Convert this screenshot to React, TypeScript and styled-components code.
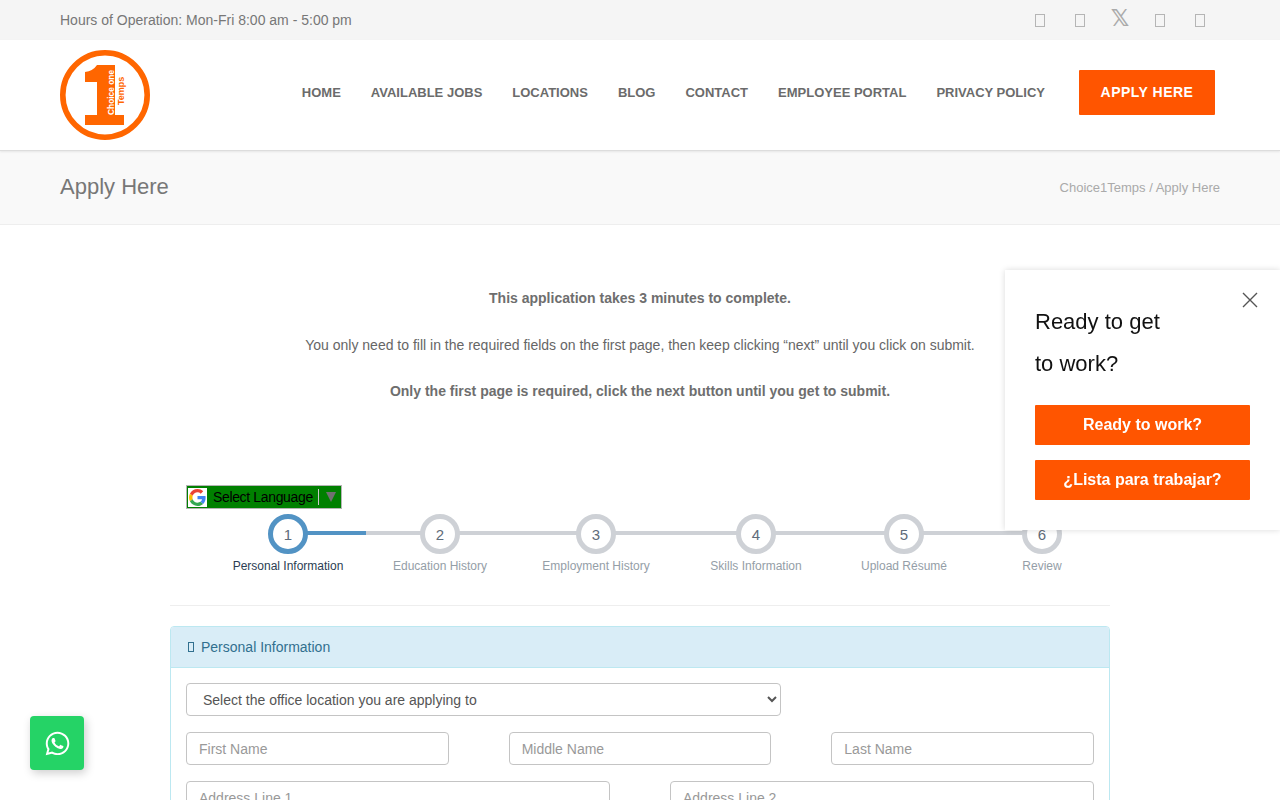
import React from 'react';
import styled, { createGlobalStyle } from 'styled-components';
import { FaWhatsapp } from 'react-icons/fa';

const GlobalStyle = createGlobalStyle`
  html, body {
    margin: 0;
    height: 100%;
    overflow: hidden;
    background: #fff;
    font-family: "Liberation Sans", Arial, sans-serif;
    font-size: 14px;
    color: #777;
  }
  * { box-sizing: border-box; }
`;

const TopBar = styled.div`
  height: 40px;
  background: #f5f5f5;
  display: flex;
  align-items: center;
  justify-content: space-between;
  padding: 0 60px;
`;

const Hours = styled.span`
  color: #777;
`;

const Socials = styled.div`
  display: flex;
  width: 200px;
  margin-left: auto;
`;

const SocialItem = styled.a`
  width: 40px;
  height: 40px;
  display: flex;
  align-items: center;
  justify-content: center;
  color: #aaa;
`;

const Tofu = styled.span`
  display: inline-block;
  width: 10px;
  height: 13px;
  border: 1px solid #b5b5b5;
`;

const SmallTofu = styled.span`
  display: inline-block;
  width: 6px;
  height: 10px;
  border: 1px solid #31708f;
`;

const XGlyph = styled.span`
  font-family: "DejaVu Sans", sans-serif;
  font-size: 23px;
  font-weight: 700;
  line-height: 1;
  margin-top: -3px;
`;

const Header = styled.header`
  height: 111px;
  background: #fff;
  border-bottom: 1px solid #ddd;
  box-shadow: 0 1px 2px rgba(0, 0, 0, 0.08);
  position: relative;
  display: flex;
  align-items: center;
  padding: 0 65px 1px 60px;
`;

const Logo = styled.svg`
  width: 90px;
  height: 90px;
  display: block;
`;

const Nav = styled.nav`
  margin-left: auto;
  margin-top: -5px;
  display: flex;
  align-items: center;
  gap: 30px;
`;

const NavLink = styled.a`
  font-weight: 700;
  font-size: 13px;
  color: #6b6b6b;
`;

const ApplyButton = styled.a`
  margin-left: 4px;
  width: 136px;
  height: 45px;
  background: #ff5500;
  color: #fff;
  font-weight: 700;
  letter-spacing: 0.5px;
  display: flex;
  align-items: center;
  justify-content: center;
  border-radius: 1px;
`;

const TitleBar = styled.div`
  height: 74px;
  background: #f9f9f9;
  border-bottom: 1px solid #eee;
  display: flex;
  align-items: center;
  justify-content: space-between;
  padding: 0 60px 2px;
`;

const PageTitle = styled.h1`
  margin: 0;
  font-size: 22px;
  font-weight: 400;
  color: #777;
`;

const Breadcrumb = styled.div`
  margin-top: 1px;
  font-size: 13px;
  color: #aaa;
`;

const Main = styled.main`
  width: 940px;
  margin: 0 auto;
  padding-top: 64px;
`;

const Intro = styled.p<{ $bold?: boolean }>`
  margin: 0 0 28.5px;
  height: 18px;
  line-height: 18px;
  text-align: center;
  font-weight: ${(p) => (p.$bold ? 700 : 400)};
  color: ${(p) => (p.$bold ? '#6e6e6e' : '#666')};
`;

const LanguageBox = styled.div`
  margin: 85px 0 0 16px;
  width: 156px;
  height: 24px;
  background: #008000;
  border: 1px solid #b5b5b5;
  display: flex;
  align-items: center;
  padding-left: 1px;
  color: #000;
  white-space: nowrap;
`;

const GoogleBadge = styled.span`
  flex: none;
  width: 19px;
  height: 19px;
  background: #fff;
  display: flex;
  align-items: center;
  justify-content: center;
  margin-right: 6px;
`;

const LanguageLabel = styled.span`
  font-size: 14px;
  letter-spacing: -0.35px;
`;

const LanguageDivider = styled.span`
  flex: none;
  width: 1px;
  height: 16px;
  background: #c8c8c8;
  margin: 0 7px 0 5px;
`;

const LanguageArrow = styled.span`
  flex: none;
  width: 0;
  height: 0;
  border-left: 5px solid transparent;
  border-right: 5px solid transparent;
  border-top: 10px solid #707070;
`;

const Stepper = styled.div`
  display: flex;
  margin-top: 5px;
  padding-left: 40px;
  padding-bottom: 32px;
  border-bottom: 1px solid #eee;
`;

const Step = styled.div<{ $width: number; $first?: boolean; $last?: boolean; $active?: boolean }>`
  flex: none;
  width: ${(p) => p.$width}px;
  position: relative;
  display: flex;
  flex-direction: column;
  align-items: center;
  white-space: nowrap;

  &::before {
    content: '';
    display: ${(p) => (p.$first ? 'none' : 'block')};
    position: absolute;
    top: 17px;
    left: 0;
    width: 50%;
    height: 4px;
    background: #ced1d6;
  }

  &::after {
    content: '';
    display: ${(p) => (p.$last ? 'none' : 'block')};
    position: absolute;
    top: 17px;
    right: 0;
    width: 50%;
    height: 4px;
    background: ${(p) => (p.$active ? '#5293c4' : '#ced1d6')};
  }
`;

const StepCircle = styled.span<{ $active?: boolean }>`
  position: relative;
  z-index: 1;
  width: 40px;
  height: 40px;
  border-radius: 50%;
  background: #fff;
  border: 5px solid ${(p) => (p.$active ? '#5293c4' : '#ced1d6')};
  display: flex;
  align-items: center;
  justify-content: center;
  font-size: 15px;
  color: #5f6c7a;
`;

const StepLabel = styled.span<{ $active?: boolean }>`
  margin-top: 5px;
  height: 14px;
  line-height: 14px;
  font-size: 12px;
  color: ${(p) => (p.$active ? '#2b3d53' : '#949ea7')};
`;

const Panel = styled.section`
  margin-top: 20px;
  border: 1px solid #bce8f1;
  border-radius: 4px;
  background: #fff;
`;

const PanelHeading = styled.div`
  height: 41px;
  background: #d9edf7;
  border-bottom: 1px solid #bce8f1;
  border-radius: 3px 3px 0 0;
  color: #31708f;
  display: flex;
  align-items: center;
  gap: 7px;
  padding-left: 17px;
`;

const PanelBody = styled.div`
  padding: 15px;
  display: flex;
  flex-direction: column;
  gap: 16px;
`;

const OfficeSelect = styled.select`
  width: 595px;
  height: 33px;
  background: #fff;
  border: 1px solid #c4c4c4;
  border-radius: 4px;
  padding-left: 12px;
  font-family: inherit;
  font-size: 14px;
  color: #555;
`;

const Row = styled.div<{ $cols: number }>`
  display: grid;
  grid-template-columns: repeat(${(p) => p.$cols}, 1fr);
  column-gap: 60px;
`;

const TextInput = styled.input`
  height: 33px;
  width: 100%;
  min-width: 0;
  border: 1px solid #c4c4c4;
  border-radius: 4px;
  padding: 0 12px;
  font-family: inherit;
  font-size: 14px;
  color: #555;
  &::placeholder {
    color: #999;
    opacity: 1;
  }
`;

const Popup = styled.aside`
  position: fixed;
  top: 270px;
  right: 0;
  width: 275px;
  height: 260px;
  background: #fff;
  box-shadow: 0 0 6px rgba(0, 0, 0, 0.15);
  padding: 31px 30px 0;
  z-index: 5;
`;

const CloseIcon = styled.svg`
  position: absolute;
  top: 22px;
  right: 22px;
  width: 16px;
  height: 16px;
`;

const PopupTitle = styled.div`
  font-size: 22px;
  line-height: 42px;
  color: #111;
  margin-bottom: 20px;
`;

const PopupButton = styled.a`
  display: flex;
  align-items: center;
  justify-content: center;
  width: 215px;
  height: 40px;
  margin-bottom: 15px;
  background: #ff5500;
  border-radius: 1px;
  color: #fff;
  font-size: 16px;
  font-weight: 700;
`;

const WhatsApp = styled.a`
  position: fixed;
  left: 30px;
  bottom: 30px;
  width: 54px;
  height: 54px;
  border-radius: 4px;
  background: #25d366;
  box-shadow: 2px 3px 10px rgba(0, 0, 0, 0.2);
  color: #fff;
  display: flex;
  align-items: center;
  justify-content: center;
  font-size: 27px;
`;

const navItems = ['HOME', 'AVAILABLE JOBS', 'LOCATIONS', 'BLOG', 'CONTACT', 'EMPLOYEE PORTAL', 'PRIVACY POLICY'];

const steps = [
  { label: 'Personal Information', width: 156 },
  { label: 'Education History', width: 148 },
  { label: 'Employment History', width: 164 },
  { label: 'Skills Information', width: 156 },
  { label: 'Upload Résumé', width: 140 },
  { label: 'Review', width: 136 },
];

function App() {
  return (
    <>
      <GlobalStyle />
      <TopBar>
        <Hours>Hours of Operation: Mon-Fri 8:00 am - 5:00 pm</Hours>
        <Socials>
          <SocialItem><Tofu /></SocialItem>
          <SocialItem><Tofu /></SocialItem>
          <SocialItem><XGlyph>𝕏</XGlyph></SocialItem>
          <SocialItem><Tofu /></SocialItem>
          <SocialItem><Tofu /></SocialItem>
        </Socials>
      </TopBar>

      <Header>
        <Logo viewBox="0 0 90 90">
          <circle cx="45" cy="45" r="42.2" fill="none" stroke="#ff6600" strokeWidth="5.6" />
          <path d="M37 15H55V65H64V75H25V65H37V32H25V22Q33 21 37 15Z" fill="#ff6600" />
          <text x="0" y="0" transform="translate(54 65) rotate(-90)" fill="#fff" fontSize="8.4" fontWeight="700">Choice one</text>
          <text x="0" y="0" transform="translate(64 55) rotate(-90)" fill="#ff6600" fontSize="9" fontWeight="700">Temps</text>
        </Logo>
        <Nav>
          {navItems.map((item) => (
            <NavLink key={item}>{item}</NavLink>
          ))}
          <ApplyButton>APPLY HERE</ApplyButton>
        </Nav>
      </Header>

      <TitleBar>
        <PageTitle>Apply Here</PageTitle>
        <Breadcrumb>Choice1Temps / Apply Here</Breadcrumb>
      </TitleBar>

      <Main>
        <Intro $bold>This application takes 3 minutes to complete.</Intro>
        <Intro>You only need to fill in the required fields on the first page, then keep clicking “next” until you click on submit.</Intro>
        <Intro $bold>Only the first page is required, click the next button until you get to submit.</Intro>

        <LanguageBox>
          <GoogleBadge>
            <svg width="17" height="17" viewBox="0 0 48 48">
              <path fill="#EA4335" d="M24 9.5c3.5 0 6.7 1.2 9.2 3.6l6.9-6.9C35.9 2.4 30.5 0 24 0 14.6 0 6.5 5.4 2.6 13.2l8 6.2C12.5 13.7 17.8 9.5 24 9.5z" />
              <path fill="#4285F4" d="M46.9 24.5c0-1.6-.1-3.1-.4-4.5H24v9h12.9c-.6 3-2.2 5.5-4.7 7.2l7.7 6c4.5-4.2 7-10.3 7-17.7z" />
              <path fill="#FBBC05" d="M10.5 28.6c-.5-1.4-.8-3-.8-4.6s.3-3.2.8-4.6l-8-6.2C.9 16.5 0 20.1 0 24s.9 7.5 2.6 10.8l7.9-6.2z" />
              <path fill="#34A853" d="M24 48c6.5 0 11.9-2.1 15.9-5.8l-7.7-6c-2.1 1.4-4.9 2.3-8.2 2.3-6.2 0-11.5-4.2-13.4-9.9l-8 6.2C6.5 42.6 14.6 48 24 48z" />
            </svg>
          </GoogleBadge>
          <LanguageLabel>Select Language</LanguageLabel>
          <LanguageDivider />
          <LanguageArrow />
        </LanguageBox>

        <Stepper>
          {steps.map((step, i) => (
            <Step key={step.label} $width={step.width} $first={i === 0} $last={i === steps.length - 1} $active={i === 0}>
              <StepCircle $active={i === 0}>{i + 1}</StepCircle>
              <StepLabel $active={i === 0}>{step.label}</StepLabel>
            </Step>
          ))}
        </Stepper>

        <Panel>
          <PanelHeading>
            <SmallTofu />
            Personal Information
          </PanelHeading>
          <PanelBody>
            <OfficeSelect defaultValue="">
              <option value="">Select the office location you are applying to</option>
            </OfficeSelect>
            <Row $cols={3}>
              <TextInput placeholder="First Name" />
              <TextInput placeholder="Middle Name" />
              <TextInput placeholder="Last Name" />
            </Row>
            <Row $cols={2}>
              <TextInput placeholder="Address Line 1" />
              <TextInput placeholder="Address Line 2" />
            </Row>
          </PanelBody>
        </Panel>
      </Main>

      <Popup>
        <CloseIcon viewBox="0 0 16 16">
          <path d="M1 1L15 15M15 1L1 15" stroke="#555" strokeWidth="1.4" fill="none" />
        </CloseIcon>
        <PopupTitle>Ready to get<br />to work?</PopupTitle>
        <PopupButton>Ready to work?</PopupButton>
        <PopupButton>¿Lista para trabajar?</PopupButton>
      </Popup>

      <WhatsApp><FaWhatsapp /></WhatsApp>
    </>
  );
}

export default App;
